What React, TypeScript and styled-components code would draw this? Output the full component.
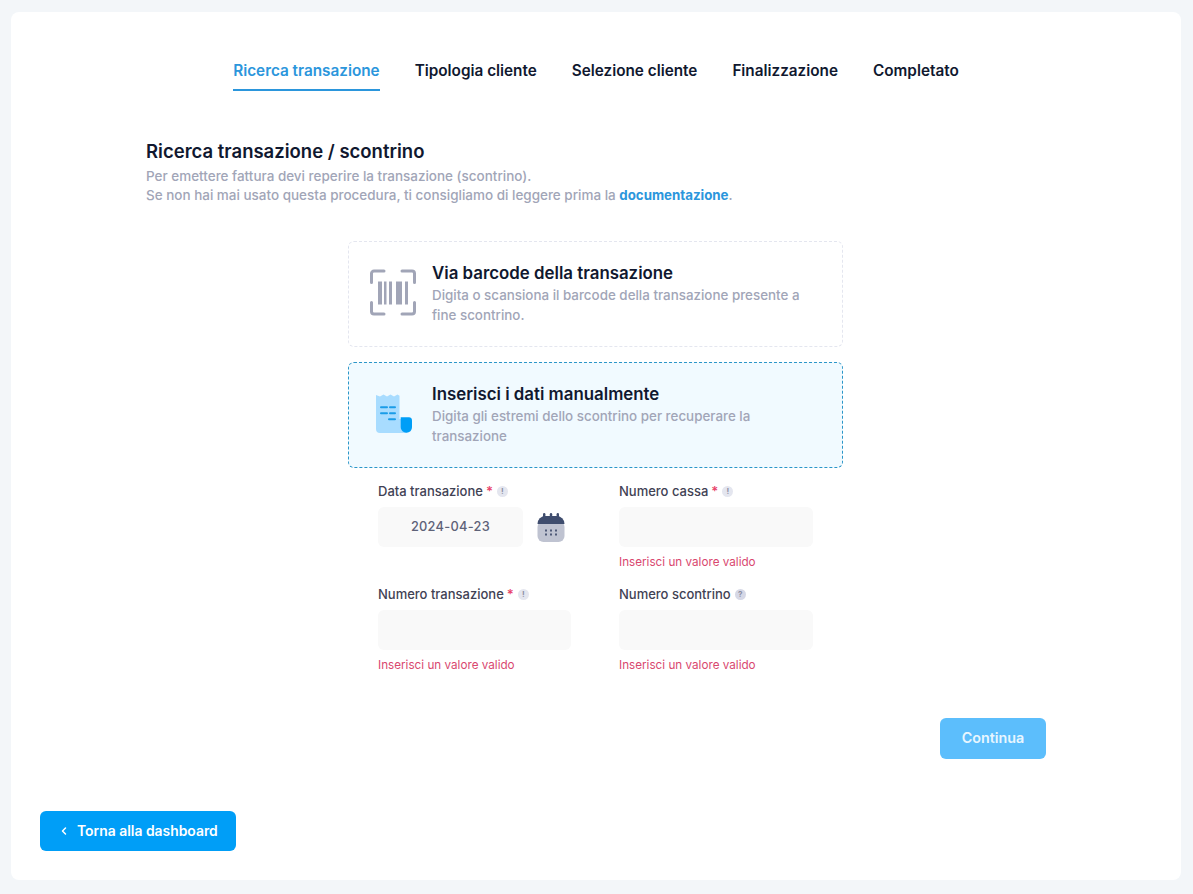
import React from "react";
import styled, { createGlobalStyle } from "styled-components";

const Global = createGlobalStyle`
  html, body { margin: 0; padding: 0; background: #f3f6f9; }
  body { font-family: "Inter", "Liberation Sans", sans-serif; color: #10182f; }
  * { box-sizing: border-box; }
`;
const Page = styled.div`
  width: 1193px; height: 894px; padding: 12px 12px 14px 11px;
  display: flex; flex-direction: column; overflow: hidden;
`;
const MainCard = styled.main`
  height: 771px; background: #fff; border-radius: 8px 8px 0 0; display: flex; flex-direction: column;
`;
const FooterCard = styled.footer`
  height: 97px; background: #fff; border-radius: 0 0 8px 8px; padding: 28px 29px;
`;
const Tabs = styled.nav`
  display: flex; justify-content: center; gap: 35px; margin-top: 44px;
`;
const Tab = styled.div<{ $active?: boolean }>`
  height: 35px; padding-top: 5px; font-size: 15.300px; font-weight: 600; line-height: 20px; white-space: nowrap;
  color: ${p => (p.$active ? "#2b96dc" : "#10182f")};
  border-bottom: 2px solid ${p => (p.$active ? "#2b96dc" : "transparent")};
`;
const Intro = styled.section`
  margin: 48px 0 0 135px;
`;
const Heading = styled.h2`
  margin: 0 0 4px; font-size: 18.500px; line-height: 24px; font-weight: 600; color: #10182f;
`;
const IntroText = styled.p`
  margin: 0; font-size: 13.480px; line-height: 19px; color: #a1a5b7; font-weight: 500;
`;
const DocLink = styled.a`
  color: #2b96dc; font-weight: 700; font-size: 13.300px; text-decoration: none;
`;
const Center = styled.div`
  width: 495px; margin: 36px 0 0 337px; display: flex; flex-direction: column; gap: 15px;
`;
const Option = styled.div<{ $active?: boolean }>`
  height: 106px; display: flex; align-items: center; gap: 15px; padding: 0 20px;
  border-radius: 6px; border: 1px dashed ${p => (p.$active ? "#2b96c8" : "#e4e6ef")};
  background: ${p => (p.$active ? "#f1faff" : "#fff")};
`;
const IconBox = styled.div`
  width: 48px; height: 48px; flex: none; display: flex; align-items: center; justify-content: center;
`;
const OptionTitle = styled.div`
  font-size: 16.850px; line-height: 20px; font-weight: 600; color: #10182f; margin-bottom: 2px;
`;
const OptionText = styled.div`
  font-size: 13.380px; line-height: 20px; font-weight: 500; color: #a1a5b7;
`;
const OptionBody = styled.div`
  width: 380px;
`;
const FormGrid = styled.div`
  width: 436px; margin: 15px 0 0 367px; display: grid; grid-template-columns: 193px 194px; column-gap: 48px;
`;
const Field = styled.div`
  height: 103px;
`;
const Label = styled.div`
  display: flex; align-items: center; height: 16px; font-size: 13px; font-weight: 500; color: #3f4254; margin-bottom: 8px; white-space: nowrap;
`;
const Req = styled.span`
  color: #e8446b; margin-left: 3px; font-weight: 600;
`;
const Hint = styled.span<{ $q?: boolean }>`
  width: 11px; height: 11px; margin-left: 4px; border-radius: 50%; background: ${p => (p.$q ? "#d6d8e6" : "#e4e6ef")};
  color: #8d90a5; font-size: 8px; line-height: 11px; text-align: center; font-weight: 700;
`;
const DateRow = styled.div`
  display: flex; align-items: center; gap: 14px;
`;
const Input = styled.div<{ $w?: number }>`
  width: ${p => (p.$w ? `${p.$w}px` : "100%")}; height: 40px; border-radius: 6px; background: #f9f9f9;
  font-size: 12.800px; font-weight: 500; color: #5e6278; line-height: 40px; text-align: center; letter-spacing: .3px;
`;
const ErrorText = styled.div`
  margin-top: 8px; font-size: 11.700px; line-height: 14px; color: #d9486f; font-weight: 400;
`;
const Actions = styled.div`
  display: flex; justify-content: flex-end; padding-right: 135px; margin-top: 29px;
`;
const Continue = styled.button`
  width: 106px; height: 41px; border: 0; border-radius: 6px; background: #5cbefc; color: #e8f6ff;
  font: 600 14.300px "Inter", sans-serif; padding: 0 0 2px;
`;
const Back = styled.button`
  width: 196px; height: 40px; border: 0; border-radius: 6px; background: #009ef7; color: #fff;
  font: 600 13.900px "Inter", sans-serif; display: flex; align-items: center; padding: 0 0 0 20px; gap: 9px;
`;

const Barcode = () => (
  <svg width="48" height="48" viewBox="0 1.500 48 48" fill="none" overflow="visible">
    <path d="M2.500 14V5a2.500 2.500 0 0 1 2.500-2.500h10M33 2.500h10a2.500 2.500 0 0 1 2.500 2.500v9M45.500 34v9a2.500 2.500 0 0 1-2.500 2.500H33M15 45.500H5a2.500 2.500 0 0 1-2.500-2.500v-9" stroke="#a1a5b7" strokeWidth="3" strokeLinecap="round" />
    <path d="M9 13h4v23H9zM15 13h2.500v23H15zM20 13h3v23h-3zM27 13h6v23h-6zM36 13h3v23h-3z" fill="#a1a5b7" />
  </svg>
);
const Receipt = () => (
  <svg width="48" height="48" viewBox="0 0 48 48" fill="none">
    <path d="M7 4l4 1.400 3.500-2 3.500 2 3.500-2 3.500 2 3.500-2 2 1.400V28h7v14H11a4 4 0 0 1-4-4z" fill="#a8dcff" />
    <path d="M31.700 26.300H40c1.700 0 3 1.300 3 3V36c0 3.500-2.500 5.700-5.500 5.700s-5.800-2.200-5.800-5.700z" fill="#009ef7" />
    <path d="M12 16.300h6M21 16.300h5M12 22.300h6M21 22.300h5M20 28.300h6" stroke="#1a9ce8" strokeWidth="2" strokeLinecap="round" />
  </svg>
);
const Calendar = () => (
  <svg width="28" height="30" viewBox="0 0 28 30" fill="none">
    <rect x="0.500" y="9" width="27" height="21" rx="6" fill="#bfc3d1" />
    <path d="M0.500 12a8 8 0 0 1 8-8h11a8 8 0 0 1 8 8z" fill="#3f4d6e" />
    <rect x="6" y="1" width="2.400" height="6" rx="1.200" fill="#3f4d6e" />
    <rect x="12.800" y="1" width="2.400" height="6" rx="1.200" fill="#3f4d6e" />
    <rect x="19.600" y="1" width="2.400" height="6" rx="1.200" fill="#3f4d6e" />
    <g fill="#4f5a78">
      <rect x="8" y="17.500" width="2" height="2" /><rect x="13" y="17.500" width="2" height="2" /><rect x="18" y="17.500" width="2" height="2" />
      <rect x="8" y="21.500" width="2" height="2" /><rect x="13" y="21.500" width="2" height="2" /><rect x="18" y="21.500" width="2" height="2" />
    </g>
  </svg>
);

export default function App() {
  return (
    <Page>
      <Global />
      <MainCard>
        <Tabs>
          <Tab $active>Ricerca transazione</Tab>
          <Tab>Tipologia cliente</Tab>
          <Tab>Selezione cliente</Tab>
          <Tab>Finalizzazione</Tab>
          <Tab>Completato</Tab>
        </Tabs>
        <Intro>
          <Heading>Ricerca transazione / scontrino</Heading>
          <IntroText>Per emettere fattura devi reperire la transazione (scontrino).</IntroText>
          <IntroText>Se non hai mai usato questa procedura, ti consigliamo di leggere prima la <DocLink>documentazione</DocLink>.</IntroText>
        </Intro>
        <Center>
          <Option>
            <IconBox><Barcode /></IconBox>
            <OptionBody>
              <OptionTitle>Via barcode della transazione</OptionTitle>
              <OptionText>Digita o scansiona il barcode della transazione presente a fine scontrino.</OptionText>
            </OptionBody>
          </Option>
          <Option $active>
            <IconBox><Receipt /></IconBox>
            <OptionBody>
              <OptionTitle>Inserisci i dati manualmente</OptionTitle>
              <OptionText>Digita gli estremi dello scontrino per recuperare la transazione</OptionText>
            </OptionBody>
          </Option>
        </Center>
        <FormGrid>
          <Field>
            <Label>Data transazione<Req>*</Req><Hint>!</Hint></Label>
            <DateRow><Input $w={145}>2024-04-23</Input><Calendar /></DateRow>
          </Field>
          <Field>
            <Label>Numero cassa<Req>*</Req><Hint>!</Hint></Label>
            <Input />
            <ErrorText>Inserisci un valore valido</ErrorText>
          </Field>
          <Field>
            <Label>Numero transazione<Req>*</Req><Hint>!</Hint></Label>
            <Input />
            <ErrorText>Inserisci un valore valido</ErrorText>
          </Field>
          <Field>
            <Label>Numero scontrino<Hint $q>?</Hint></Label>
            <Input />
            <ErrorText>Inserisci un valore valido</ErrorText>
          </Field>
        </FormGrid>
        <Actions><Continue>Continua</Continue></Actions>
      </MainCard>
      <FooterCard>
        <Back>
          <svg width="8" height="10" viewBox="0 0 8 10" fill="none"><path d="M5.500 2L2.500 5l3 3" stroke="#fff" strokeWidth="1.500" strokeLinecap="round" strokeLinejoin="round" /></svg>
          Torna alla dashboard
        </Back>
      </FooterCard>
    </Page>
  );
}
